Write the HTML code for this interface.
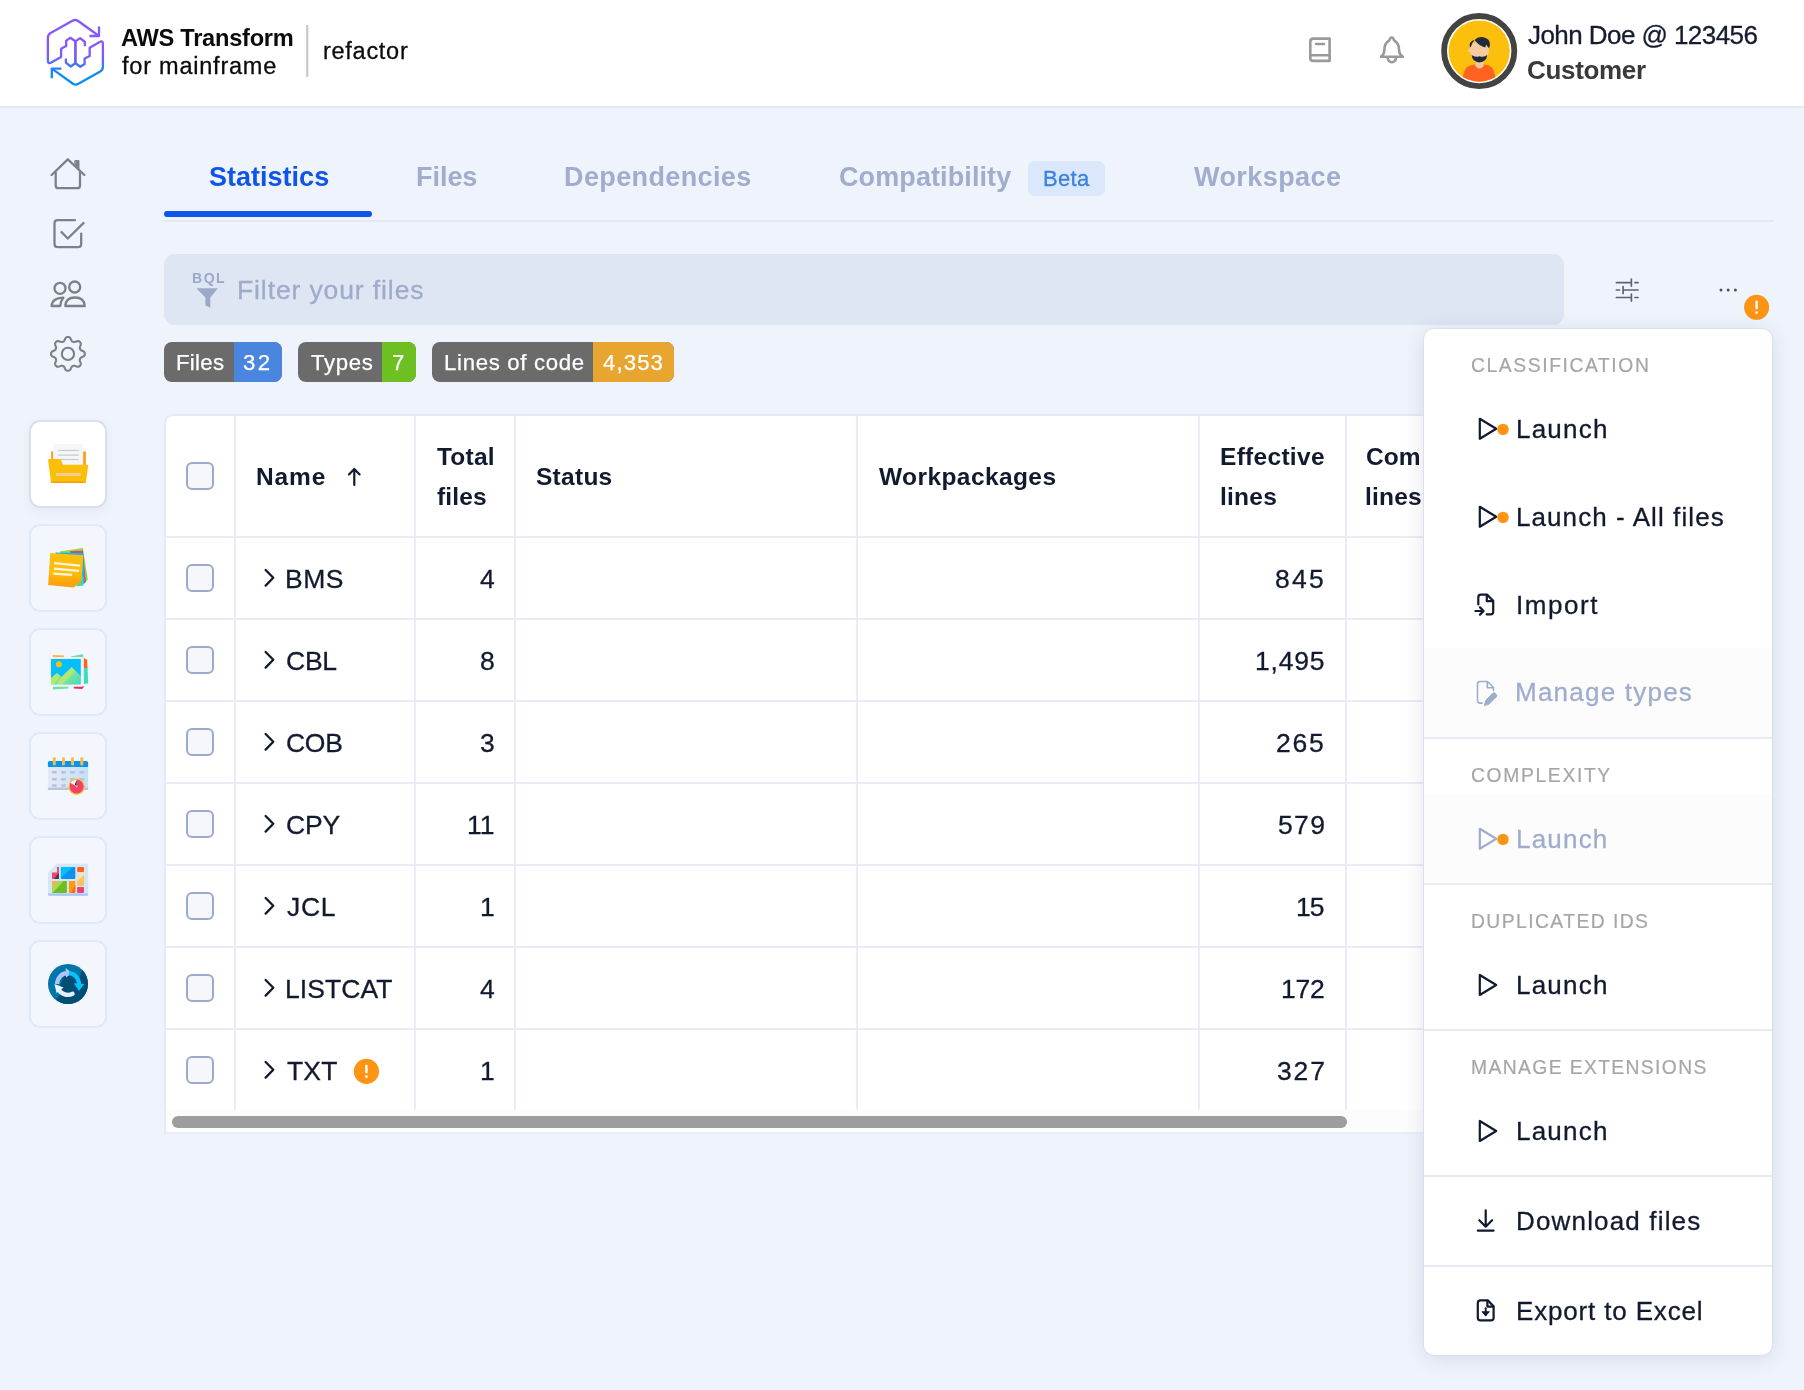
<!DOCTYPE html>
<html lang="en">
<head>
<meta charset="utf-8">
<title>AWS Transform for mainframe - refactor</title>
<style>
*{box-sizing:border-box;margin:0;padding:0}
html,body{width:1804px;height:1390px;overflow:hidden}
body{background:#eff3fc;font-family:"Liberation Sans",Arial,sans-serif;color:#111a2e;position:relative}
.a{position:absolute}
.t{position:absolute;white-space:nowrap;line-height:1;will-change:transform}
svg{position:absolute;overflow:visible}
#hdr{position:absolute;left:0;top:0;width:1804px;height:108px;background:#fff;border-bottom:2px solid #e4e8f2}
.card{position:absolute;left:28.6px;width:78.8px;height:87.4px;border-radius:11px;background:#f3f6fc;border:2px solid #dfe9f7;margin-top:-.6px}
.card.on{background:#fff;box-shadow:0 4px 12px rgba(120,140,190,.08);border-color:#d9e0ed}
.tab{font-weight:bold;color:#a0adcc}
.chip{position:absolute;top:342px;height:40px;border-radius:8px;overflow:hidden;background:#6b6b6b}
.chip i{position:absolute;top:0;right:0;height:40px}
.chipt{color:#fff;-webkit-text-stroke:.25px #fff}
#tbl{position:absolute;left:164px;top:414px;width:1300px;height:720px;background:#fff;border:2px solid #e5eaf6;border-bottom-color:#eaeef8;border-radius:9px 0 0 0;overflow:hidden}
.vl{position:absolute;top:416px;width:2px;height:694px;background:#e9edf8}
.hl{position:absolute;left:166px;width:1280px;height:2px;background:#e9edf8}
.cb{position:absolute;left:186px;width:28px;height:28px;border:2px solid #9da9ca;border-radius:6px;background:#f6f7fb}
.cell{color:#111a2e;-webkit-text-stroke:.3px #111a2e}
.th{font-weight:bold;color:#111a2e}
#menu{position:absolute;left:1424px;top:329px;width:348px;height:1026px;background:#fff;border-radius:10px;box-shadow:0 3px 22px rgba(40,50,80,.13),0 0 0 1px rgba(226,231,243,.8)}
.mh{color:#a6a6a6;-webkit-text-stroke:.2px #a6a6a6}
.mi{color:#111a2e;-webkit-text-stroke:.3px #111a2e}
.dis{color:#9fadcd;-webkit-text-stroke:.3px #9fadcd}
.md{position:absolute;left:1424px;width:348px;height:2px;background:#e6ebf6}
.mbg{position:absolute;left:1424px;width:348px;background:#fcfcfd}

</style>
</head>
<body>
<div id="hdr"></div>
<svg style="left:0;top:0" width="1804" height="106" viewBox="0 0 1804 106" fill="none">
<defs><linearGradient id="lg" gradientUnits="userSpaceOnUse" x1="0" y1="55" x2="0" y2="75"><stop offset="0" stop-color="#8458fa"/><stop offset="1" stop-color="#078ef2"/></linearGradient>
<clipPath id="avc"><circle cx="1479.2" cy="51.1" r="30.6"/></clipPath></defs>
<g stroke="url(#lg)" stroke-width="2.3" stroke-linejoin="round" stroke-linecap="butt">
<g id="lgA"><path d="M99 36 L77.8 20.8 Q75.2 19.2 72.4 20.8 L50.6 33 Q47.9 34.6 47.9 37.8 L47.9 60.6 Q47.9 64.4 51.2 62.6 L61.1 56.9 L61.1 48.7 L66.2 46 L66.2 40.6 L70.5 37.8 L75.3 41.3 L75.3 63.2 L70.7 66.5 L65.9 62.6 L65.9 58.4"/><path d="M99 26.4 L99 36 L89.4 36"/></g>
<g><path d="M 51.8 68.6 L 73.0 83.8 Q 75.6 85.4 78.4 83.8 L 100.2 71.6 Q 102.9 70.0 102.9 66.8 L 102.9 44.0 Q 102.9 40.2 99.6 42.0 L 89.7 47.7 L 89.7 55.9 L 84.6 58.6 L 84.6 64.0 L 80.3 66.8 L 75.5 63.3 L 75.5 41.4 L 80.1 38.1 L 84.9 42.0 L 84.9 46.2"/><path d="M 51.8 78.2 L 51.8 68.6 L 61.4 68.6"/></g>
</g>
<rect x="306.2" y="25" width="2.1" height="52" fill="#c6c6c6"/>
<g stroke="#9a9a9a" stroke-width="2.6" stroke-linecap="round" stroke-linejoin="round">
<path d="M1329.6 38.6 L1313.3 38.6 Q1310.3 38.6 1310.3 41.6 L1310.3 57.9 Q1310.3 60.9 1313.3 60.9 L1329.6 60.9 Z"/>
<path d="M1310.6 55.3 L1329.6 55.3"/><path d="M1316 44 L1324 44"/>
<path d="M1381.2 56.8 L1402.6 56.8" /><path d="M1381.2 56.8 Q1384.4 54 1384.4 50 C1384.4 45.5 1385.4 43 1388.4 41.2 Q1389.8 40.2 1389.9 38.8 A1.9 1.9 0 0 1 1393.5 38.8 Q1393.6 40.2 1395 41.2 C1398 43 1399 45.5 1399 50 Q1399 54 1402.6 56.8"/>
<path d="M1387.7 57.6 A4.2 4.6 0 0 0 1396.1 57.6"/>
</g>
<circle cx="1479.2" cy="51.1" r="35.1" stroke="#434341" stroke-width="5.8" fill="#fff"/>
<circle cx="1479.2" cy="51.1" r="30.6" fill="#fbbf0c"/>
<g clip-path="url(#avc)">
<path d="M1462.6 84 Q1462.6 67.5 1470 65.6 L1475 64.6 L1484 64.6 L1489 65.6 Q1495.6 67.5 1495.6 84 Z" fill="#ff6221"/>
<path d="M1475.4 58 L1483.6 58 L1483.6 66 Q1479.5 71 1475.4 66 Z" fill="#f0c79a"/>
<ellipse cx="1479.4" cy="50.4" rx="9.6" ry="9.6" fill="#f3cda1"/>
<circle cx="1469.8" cy="50.5" r="1.8" fill="#f3cda1"/>
<path d="M1471.6 55 Q1475 57.8 1479.4 56.2 Q1484 57.8 1487.2 55 Q1486.6 62.2 1479.4 62.4 Q1472.4 62.2 1471.6 55 Z" fill="#1f2a3c"/>
<path d="M1474.6 40 Q1478 36 1483.6 37.2 Q1490.4 39 1490 45 Q1489.6 47.4 1488.6 48 L1486 44.6 L1485.4 47.6 Q1479 46 1474.6 40 Z" fill="#1f2a3c"/>
<path d="M1474.6 40 Q1470.6 40.6 1469.6 44.4 Q1469.6 46.6 1470.6 47.6 Q1471.6 43 1474.6 40 Z" fill="#1f2a3c"/>
</g>
</svg>
<div id="t1" class="t " style="top:27px;font-size:23.6px;left:120.60px;letter-spacing:-0.245px;color:#0b0b0b;font-weight:bold;">AWS Transform</div>
<div id="t2" class="t " style="top:55px;font-size:23.5px;left:121.84px;letter-spacing:0.773px;color:#0b0b0b;-webkit-text-stroke:.3px #0b0b0b;">for mainframe</div>
<div id="t3" class="t " style="top:40px;font-size:23.5px;left:322.71px;letter-spacing:0.724px;color:#0b0b0b;-webkit-text-stroke:.3px #0b0b0b;">refactor</div>
<div id="t4" class="t " style="top:22px;font-size:26px;left:1528.15px;letter-spacing:-0.562px;color:#151c2e;-webkit-text-stroke:.3px #151c2e;">John Doe @ 123456</div>
<div id="t5" class="t " style="top:57px;font-size:26px;left:1526.97px;letter-spacing:-0.331px;color:#3a3a3a;font-weight:bold;">Customer</div>
<svg style="left:0;top:140px" width="140" height="260" viewBox="0 140 140 260" fill="none" stroke="#7c808a" stroke-width="2.3" stroke-linecap="round" stroke-linejoin="round">
<path d="M51.6 175 L67.8 159.3 L84.4 175"/><path d="M55.7 172.4 L55.7 185.4 Q55.7 188.2 58.5 188.2 L77.2 188.2 Q80 188.2 80 185.4 L80 172.4"/>
<path d="M75.2 160.6 L79 160.6 L79 170.2 L75.2 166.4 Z" fill="#7c808a" stroke-width="1"/>
<path d="M75 220.2 L57.6 220.2 Q54.5 220.2 54.5 223.3 L54.5 244.1 Q54.5 247.2 57.6 247.2 L78.1 247.2 Q81.2 247.2 81.2 244.1 L81.2 233.6"/>
<path d="M60.8 231.4 L67.8 238.5 L84.2 222.4" stroke-linecap="butt" stroke-linejoin="miter"/>
<circle cx="60" cy="288.3" r="5.5"/><circle cx="74.7" cy="287" r="5.5"/>
<path d="M65.3 306 C65.6 300.4 68.6 297.5 75 297.5 C81.4 297.5 84.4 300.4 84.7 306 Z"/>
<path d="M51.6 306 C52 300.6 55.4 297.7 63.4 297.6 C61.4 300 60.5 302.6 60.3 306 Z"/>
<circle cx="67.95" cy="353.9" r="6.1" stroke-width="2.1"/>
<path d="M84.85 353.90 L84.80 354.56 L84.61 355.21 L84.24 355.83 L83.58 356.38 L82.66 356.83 L81.73 357.21 L81.04 357.59 L80.58 358.00 L80.28 358.45 L80.05 358.91 L79.88 359.40 L79.79 359.93 L79.81 360.54 L80.04 361.31 L80.42 362.23 L80.75 363.20 L80.83 364.05 L80.66 364.76 L80.33 365.34 L79.90 365.85 L79.39 366.28 L78.81 366.61 L78.10 366.78 L77.25 366.70 L76.28 366.37 L75.36 365.99 L74.59 365.76 L73.98 365.74 L73.45 365.83 L72.96 366.00 L72.50 366.23 L72.05 366.53 L71.64 366.99 L71.26 367.68 L70.88 368.61 L70.43 369.53 L69.88 370.19 L69.26 370.56 L68.61 370.75 L67.95 370.80 L67.29 370.75 L66.64 370.56 L66.02 370.19 L65.47 369.53 L65.02 368.61 L64.64 367.68 L64.26 366.99 L63.85 366.53 L63.40 366.23 L62.94 366.00 L62.45 365.83 L61.92 365.74 L61.31 365.76 L60.54 365.99 L59.62 366.37 L58.65 366.70 L57.80 366.78 L57.09 366.61 L56.51 366.28 L56.00 365.85 L55.57 365.34 L55.24 364.76 L55.07 364.05 L55.15 363.20 L55.48 362.23 L55.86 361.31 L56.09 360.54 L56.11 359.93 L56.02 359.40 L55.85 358.91 L55.62 358.45 L55.32 358.00 L54.86 357.59 L54.17 357.21 L53.24 356.83 L52.32 356.38 L51.66 355.83 L51.29 355.21 L51.10 354.56 L51.05 353.90 L51.10 353.24 L51.29 352.59 L51.66 351.97 L52.32 351.42 L53.24 350.97 L54.17 350.59 L54.86 350.21 L55.32 349.80 L55.62 349.35 L55.85 348.89 L56.02 348.40 L56.11 347.87 L56.09 347.26 L55.86 346.49 L55.48 345.57 L55.15 344.60 L55.07 343.75 L55.24 343.04 L55.57 342.46 L56.00 341.95 L56.51 341.52 L57.09 341.19 L57.80 341.02 L58.65 341.10 L59.62 341.43 L60.54 341.81 L61.31 342.04 L61.92 342.06 L62.45 341.97 L62.94 341.80 L63.40 341.57 L63.85 341.27 L64.26 340.81 L64.64 340.12 L65.02 339.19 L65.47 338.27 L66.02 337.61 L66.64 337.24 L67.29 337.05 L67.95 337.00 L68.61 337.05 L69.26 337.24 L69.88 337.61 L70.43 338.27 L70.88 339.19 L71.26 340.12 L71.64 340.81 L72.05 341.27 L72.50 341.57 L72.96 341.80 L73.45 341.97 L73.98 342.06 L74.59 342.04 L75.36 341.81 L76.28 341.43 L77.25 341.10 L78.10 341.02 L78.81 341.19 L79.39 341.52 L79.90 341.95 L80.33 342.46 L80.66 343.04 L80.83 343.75 L80.75 344.60 L80.42 345.57 L80.04 346.49 L79.81 347.26 L79.79 347.87 L79.88 348.40 L80.05 348.89 L80.28 349.35 L80.58 349.80 L81.04 350.21 L81.73 350.59 L82.66 350.97 L83.58 351.42 L84.24 351.97 L84.61 352.59 L84.80 353.24 Z" stroke-width="2.1"/>
</svg>
<div class="card on" style="top:421px"></div>
<div class="card" style="top:525px"></div>
<div class="card" style="top:629px"></div>
<div class="card" style="top:733px"></div>
<div class="card" style="top:837px"></div>
<div class="card" style="top:941px"></div>
<svg style="left:0;top:400px" width="140" height="640" viewBox="0 400 140 640">
<defs>
<linearGradient id="gn" x1="0" y1="0" x2="0" y2="1"><stop offset=".55" stop-color="#fbbf0a"/><stop offset="1" stop-color="#ff9a0c"/></linearGradient>
<linearGradient id="gc" x1="0" y1="0" x2="1" y2="0"><stop offset="0" stop-color="#e6eaf6"/><stop offset="1" stop-color="#c6dff6"/></linearGradient>
<linearGradient id="gm" x1="0" y1="0" x2="1" y2="1"><stop offset=".2" stop-color="#8ee49a"/><stop offset="1" stop-color="#40dcc0"/></linearGradient>
<clipPath id="cph"><rect x="50.9" y="658.8" width="30" height="25.7" rx="1.2"/></clipPath>
<clipPath id="ccl"><circle cx="68" cy="984" r="20"/></clipPath>
</defs>
<!-- folder -->
<rect x="51.2" y="451.3" width="2" height="9" rx=".8" fill="#ff9a0c"/><rect x="83.1" y="451.3" width="2.7" height="15" rx="1" fill="#ff9a0c"/>
<rect x="53.1" y="444.3" width="30" height="21" rx="1.5" fill="#f6f6f8"/>
<rect x="58.3" y="449.9" width="20.4" height="1.2" fill="#c5c9d1"/><rect x="58.3" y="454.5" width="20.4" height="1.2" fill="#c5c9d1"/><rect x="61" y="458.9" width="17.7" height="1.2" fill="#c5c9d1"/>
<path d="M49 459 L59.8 459 Q60.8 459 61.2 460 L62.6 464 Q62.9 464.8 63.9 464.8 L87.2 464.8 Q88.3 464.8 88.2 466 L85.9 481.8 Q85.7 483 84.5 483 L52.3 483 Q51.1 483 50.9 481.8 L48.1 460.2 Q48 459 49 459 Z" fill="#fbbf0a"/>
<path d="M50.8 481.6 L86 481.6 L85.9 481.9 Q85.7 483.1 84.5 483.1 L52.3 483.1 Q51.1 483.1 50.9 481.9 Z" fill="#ff9a0c"/>
<rect x="56.1" y="473" width="24.6" height="2.8" fill="#f5cda0"/>
<!-- sticky notes -->
<path d="M59.6 551.4 L82.9 548.1 L87.8 579.4 L83.7 583.7 Z" fill="#8fd94a"/>
<path d="M69.9 551.2 L82.9 550.7 L85.9 582 L83.7 584 Z" fill="#f0386b"/>
<path d="M55 552.6 L83.3 553.1 L84.5 582 L80 585 Z" fill="#14b5f5"/>
<path d="M76 586.2 L83.6 585.5 L83.3 575 Z" fill="#3dd6b5"/>
<path d="M50.3 552.9 L83.3 555.3 L81.6 580.7 L73.8 587.6 L48.1 585 Z" fill="url(#gn)"/>
<g stroke="#fdf3e4" stroke-width="2.2"><path d="M54 563.2 L79.9 565.6"/><path d="M54 568.6 L79 570.8"/><path d="M53.3 573.6 L72.1 574.9"/></g>
<!-- photos -->
<path d="M52.7 654.9 L64 655.4 L64 658 L52.7 658 Z" fill="#fbb53a"/>
<path d="M70.8 656.4 L82.9 654 L83.6 658 L70.8 658 Z" fill="#70e29a"/>
<path d="M83.5 658 L87 659.4 L87.6 668 L83.5 668 Z" fill="#ff6414"/>
<path d="M83.5 667.9 L87.6 667.9 L88.2 683.4 L83.5 684 Z" fill="#3ddcc0"/>
<path d="M52.7 686 L68.4 686 L68.4 688.6 L53 689.6 Z" fill="#70e29a"/>
<path d="M73.8 686 L83.7 686 L83.6 687.4 L82 689 L73.8 688.6 Z" fill="#f0285c"/>
<rect x="48.8" y="656.9" width="34.9" height="29.8" rx="1.6" fill="#eff1fb"/>
<g clip-path="url(#cph)"><rect x="50.9" y="658.8" width="30" height="25.7" fill="#05bffd"/>
<path d="M50.9 678 L57 673 L61.4 677 L71.7 667 L80.9 676.6 L80.9 684.5 L50.9 684.5 Z" fill="#b0e870"/>
<path d="M75.4 670.8 L80.9 676.6 L80.9 684.5 L62.4 684.5 Z" fill="url(#gm)"/><path d="M58.6 674.4 L61.4 677.1 L56.7 684.5 L53.8 684.5 L59.8 677 Z" fill="#7ee2a2"/>
<circle cx="58.9" cy="664.2" r="3" fill="#fbbf0a"/></g>
<!-- calendar -->
<rect x="47.9" y="766" width="40.2" height="24" rx="1" fill="url(#gc)"/>
<rect x="47.9" y="787.6" width="40.2" height="2.4" fill="#b9c5dd"/>
<path d="M47.9 767.1 L47.9 762.6 Q47.9 760.9 49.6 760.9 L86.4 760.9 Q88.1 760.9 88.1 762.6 L88.1 767.1 Z" fill="#0c93f2"/>
<g fill="#b4c2dd"><rect x="51.9" y="771" width="4.8" height="2.6" rx=".6"/><rect x="61.1" y="771" width="4.8" height="2.6" rx=".6"/><rect x="70.1" y="771" width="4.8" height="2.6" rx=".6"/><rect x="79.4" y="771" width="4.8" height="2.6" rx=".6"/>
<rect x="51.9" y="777.9" width="4.8" height="2.6" rx=".6"/><rect x="61.1" y="777.9" width="4.8" height="2.6" rx=".6"/><rect x="70.1" y="777.9" width="4.8" height="2.6" rx=".6"/><rect x="79.4" y="777.9" width="4.8" height="2.6" rx=".6"/>
<rect x="51.9" y="784.2" width="4.8" height="2.6" rx=".6"/><rect x="61.1" y="784.2" width="4.8" height="2.6" rx=".6"/></g>
<g fill="#f7bf3e"><rect x="52.8" y="757" width="3" height="8.6" rx="1.5"/><rect x="62" y="757" width="3" height="8.6" rx="1.5"/><rect x="71" y="757" width="3" height="8.6" rx="1.5"/><rect x="80.3" y="757" width="3" height="8.6" rx="1.5"/></g>
<circle cx="76.6" cy="786.6" r="7.6" fill="#f0416f" stroke="#fbbf24" stroke-width="1.2"/>
<path d="M76.6 786.6 L76.6 779.6 A7 7 0 0 0 70.6 783 Z" fill="#f4f1ee"/>
<path d="M76.6 786.6 L76.6 780.2 L74.8 784.6 Z" fill="#2b2b3a"/>
<circle cx="76.6" cy="786.6" r="1" fill="#fbbf24"/>
<!-- dashboard -->
<path d="M56.6 863.8 L87 863.8 Q88.1 863.8 88.1 864.9 L88.1 894.6 Q88.1 895.7 87 895.7 L49.2 895.7 Q48.1 895.7 48.1 894.6 L48.1 872.4 Z" fill="#d5e6f8"/>
<path d="M48.1 893.4 L88.1 893.4 L88.1 894.6 Q88.1 895.7 87 895.7 L49.2 895.7 Q48.1 895.7 48.1 894.6 Z" fill="#a5c6f6"/>
<path d="M57 867 L58.9 867 L58.9 878.9 L52 878.9 L52 872.4 L57 872.4 Z" fill="#f0416f"/>
<path d="M58.9 872.8 L58.9 878.9 L54 878.9 Z" fill="#3f3f46"/>
<rect x="60.9" y="867" width="14.4" height="11.9" rx=".8" fill="#0d92f0"/><path d="M60.9 867.8 Q60.9 867 61.7 867 L73 867 L60.9 878 Z" fill="#05bffd"/>
<rect x="77.1" y="867" width="6.9" height="5" rx="1" fill="#ff6414"/>
<rect x="77.1" y="873.1" width="6.9" height="12.7" rx="1" fill="#f9c55c"/><path d="M77.1 874.1 Q77.1 873.1 78.1 873.1 L83 873.1 Q84 873.1 84 874.1 L84 875 L77.1 881 Z" fill="#fbe2bd"/>
<rect x="77.1" y="886.9" width="6.9" height="6" rx=".8" fill="#f0416f"/>
<rect x="52" y="880.9" width="14.9" height="12" rx=".8" fill="#6bbf1f"/><path d="M52 881.7 Q52 880.9 52.8 880.9 L63.6 880.9 L52.6 892.9 L52 892.9 Z" fill="#a8d95a"/><path d="M52 881.7 Q52 880.9 52.8 880.9 L58.6 880.9 L52 887.6 Z" fill="#fbb348"/>
<rect x="68.9" y="880.9" width="6.4" height="12" rx=".8" fill="#ff9a0c"/><path d="M75.3 885 L75.3 892.1 Q75.3 892.9 74.5 892.9 L70.6 892.9 Z" fill="#ff6a1c"/>
<!-- refresh -->
<circle cx="68" cy="984" r="20" fill="#0275a8"/>
<g clip-path="url(#ccl)"><path d="M84 964 L96 976 L76 1012 L56 1000 L62 992 L60 985 L64 976 L72 974 L79 979 Z" fill="#014e75"/></g>
<path d="M57.2 984 A10.8 10.8 0 0 1 67 973" fill="none" stroke="#a8c8fa" stroke-width="4.3"/>
<path d="M65.6 968 L72.4 973 L66 977.6 Z" fill="#a8c8fa"/>
<path d="M69 973.2 A10.8 10.8 0 0 1 78.9 984" fill="none" stroke="#05c3ff" stroke-width="4.3"/>
<path d="M73.8 983.2 L84.2 984 L79 991 Z" fill="#05c3ff"/>
<path d="M72.6 993.8 A10.8 10.8 0 0 1 58.6 989.4" fill="none" stroke="#e3eefd" stroke-width="4.3" stroke-linecap="round"/>
<path d="M54.4 984 L63.6 987.6 L56.6 993 Z" fill="#eef3fd"/>
</svg>
<div class="a" style="left:164px;top:220px;width:1610px;height:2px;background:#e3e8f3"></div>
<div class="a" style="left:164px;top:211px;width:208px;height:6px;border-radius:3px;background:#0f55ea"></div>
<div id="t6" class="t tab" style="top:164px;font-size:27px;left:209.04px;letter-spacing:0.013px;color:#1055e8;">Statistics</div>
<div id="t7" class="t tab" style="top:164px;font-size:27px;left:415.72px;letter-spacing:-0.040px;">Files</div>
<div id="t8" class="t tab" style="top:164px;font-size:27px;left:564.25px;letter-spacing:0.382px;">Dependencies</div>
<div id="t9" class="t tab" style="top:164px;font-size:27px;left:839.20px;letter-spacing:0.101px;">Compatibility</div>
<div class="a" style="left:1028px;top:161px;width:77px;height:35px;border-radius:7px;background:#dbe8fb"></div>
<div id="t10" class="t " style="top:168px;font-size:22px;left:1042.51px;letter-spacing:0.328px;color:#3a82df;-webkit-text-stroke:.3px #3a82df;">Beta</div>
<div id="t11" class="t tab" style="top:164px;font-size:27px;left:1193.65px;letter-spacing:0.421px;">Workspace</div>
<div class="a" style="left:164px;top:254px;width:1400px;height:71px;border-radius:11px;background:#dee5f3"></div>
<div id="t12" class="t " style="top:271px;font-size:14px;left:191.50px;letter-spacing:1.529px;color:#9aa8c9;font-weight:bold;">BQL</div>
<svg style="left:190px;top:285px" width="34" height="28" viewBox="190 285 34 28"><path d="M197.4 288.2 L217 288.2 Q217.9 288.2 217.4 289 L210.3 297.6 L210.3 307.8 L205.4 305.2 L205.4 297.6 L197 289 Q196.5 288.2 197.4 288.2 Z" fill="#9aa8c9"/></svg>
<div id="t13" class="t " style="top:277px;font-size:26.5px;left:237.15px;letter-spacing:0.889px;color:#9eabcb;-webkit-text-stroke:.3px #9eabcb;">Filter your files</div>
<svg style="left:1600px;top:270px" width="190" height="60" viewBox="1600 270 190 60" fill="none">
<g stroke="#5f636e" stroke-width="1.7" stroke-linecap="round">
<path d="M1616.4 282.6 L1631.4 282.6 M1631.4 279.1 L1631.4 286.1 M1635 282.6 L1638 282.6"/>
<path d="M1616.4 290 L1619.4 290 M1623.1 286.6 L1623.1 293.4 M1623.1 290 L1638 290"/>
<path d="M1616.4 297.5 L1631.4 297.5 M1631.4 294 L1631.4 301 M1635 297.5 L1638 297.5"/>
</g>
<circle cx="1721" cy="290" r="1.5" fill="#50535e"/><circle cx="1728.2" cy="290" r="1.5" fill="#50535e"/><circle cx="1735.4" cy="290" r="1.5" fill="#50535e"/>
<circle cx="1756.6" cy="307.3" r="12.5" fill="#fd9413"/>
<rect x="1755.4" y="300.6" width="2.4" height="8.6" rx="1" fill="#fff"/><circle cx="1756.6" cy="312.6" r="1.4" fill="#fff"/>
</svg>
<div class="chip" style="left:164px;width:118px"><i style="width:48px;background:#4a86e0"></i></div><div id="t14" class="t chipt" style="top:352px;font-size:22.2px;left:176.21px;letter-spacing:0.285px;">Files</div><div id="t15" class="t chipt" style="top:352px;font-size:22.2px;left:242.54px;letter-spacing:2.300px;">32</div>
<div class="chip" style="left:298px;width:118px"><i style="width:34px;background:#6dbf22"></i></div><div id="t16" class="t chipt" style="top:352px;font-size:22.2px;left:311.13px;letter-spacing:0.632px;">Types</div><div id="t17" class="t chipt" style="top:352px;font-size:22.2px;left:391.86px;letter-spacing:0.000px;">7</div>
<div class="chip" style="left:432px;width:242px"><i style="width:81px;background:#e8a530"></i></div><div id="t18" class="t chipt" style="top:352px;font-size:22.2px;left:444.03px;letter-spacing:0.680px;">Lines of code</div><div id="t19" class="t chipt" style="top:352px;font-size:22.2px;left:602.84px;letter-spacing:1.106px;">4,353</div>
<div id="tbl"></div>
<div class="a" style="left:166px;top:1110px;width:1280px;height:22px;background:#fcfcfc"></div>
<div class="a" style="left:172px;top:1116px;width:1175px;height:12px;border-radius:6px;background:#9d9d9d"></div>
<div class="vl" style="left:234px"></div>
<div class="vl" style="left:414px"></div>
<div class="vl" style="left:514px"></div>
<div class="vl" style="left:856px"></div>
<div class="vl" style="left:1198px"></div>
<div class="vl" style="left:1345px"></div>
<div class="hl" style="top:536px"></div>
<div class="hl" style="top:618px"></div>
<div class="hl" style="top:700px"></div>
<div class="hl" style="top:782px"></div>
<div class="hl" style="top:864px"></div>
<div class="hl" style="top:946px"></div>
<div class="hl" style="top:1028px"></div>
<div class="cb" style="top:462px"></div>
<div id="t20" class="t th" style="top:465px;font-size:24.5px;left:256.02px;letter-spacing:0.854px;">Name</div>
<svg style="left:344px;top:464px" width="20" height="26" viewBox="344 464 20 26" fill="none" stroke="#111a2e" stroke-width="2.2" stroke-linecap="round" stroke-linejoin="round"><path d="M354.3 485 L354.3 469.4 M349 474.4 L354.3 469 L359.6 474.4"/></svg>
<div id="t21" class="t th" style="top:445px;font-size:24.5px;left:437.39px;letter-spacing:0.215px;">Total</div>
<div id="t22" class="t th" style="top:485px;font-size:24.5px;left:436.51px;letter-spacing:0.165px;">files</div>
<div id="t23" class="t th" style="top:465px;font-size:24.5px;left:535.93px;letter-spacing:0.273px;">Status</div>
<div id="t24" class="t th" style="top:465px;font-size:24.5px;left:879.30px;letter-spacing:0.413px;">Workpackages</div>
<div id="t25" class="t th" style="top:445px;font-size:24.5px;left:1220.48px;letter-spacing:0.301px;">Effective</div>
<div id="t26" class="t th" style="top:485px;font-size:24.5px;left:1219.69px;letter-spacing:0.231px;">lines</div>
<div id="t27" class="t th" style="top:445px;font-size:24.5px;left:1366.40px;width:54px;overflow:hidden;">Comment</div>
<div id="t28" class="t th" style="top:485px;font-size:24.5px;left:1365.29px;letter-spacing:0.208px;">lines</div>
<div class="cb" style="top:564px"></div>
<div id="t29" class="t cell" style="top:566px;font-size:26.5px;left:285.35px;letter-spacing:0.553px;">BMS</div>
<div id="t30" class="t cell" style="top:566px;font-size:26.5px;right:1309.22px;">4</div>
<div id="t31" class="t cell" style="top:566px;font-size:26.5px;right:477.56px;letter-spacing:2.300px;">845</div>
<div class="cb" style="top:646px"></div>
<div id="t32" class="t cell" style="top:648px;font-size:26.5px;left:286.35px;letter-spacing:-0.240px;">CBL</div>
<div id="t33" class="t cell" style="top:648px;font-size:26.5px;right:1309.07px;">8</div>
<div id="t34" class="t cell" style="top:648px;font-size:26.5px;right:478.70px;letter-spacing:0.810px;">1,495</div>
<div class="cb" style="top:728px"></div>
<div id="t35" class="t cell" style="top:730px;font-size:26.5px;left:286.35px;letter-spacing:-0.309px;">COB</div>
<div id="t36" class="t cell" style="top:730px;font-size:26.5px;right:1309.22px;">3</div>
<div id="t37" class="t cell" style="top:730px;font-size:26.5px;right:478.14px;letter-spacing:1.738px;">265</div>
<div class="cb" style="top:810px"></div>
<div id="t38" class="t cell" style="top:812px;font-size:26.5px;left:286.35px;letter-spacing:-0.156px;">CPY</div>
<div id="t39" class="t cell" style="top:812px;font-size:26.5px;right:1309.28px;">11</div>
<div id="t40" class="t cell" style="top:812px;font-size:26.5px;right:477.87px;letter-spacing:1.332px;">579</div>
<div class="cb" style="top:892px"></div>
<div id="t41" class="t cell" style="top:894px;font-size:26.5px;left:287.00px;letter-spacing:0.700px;">JCL</div>
<div id="t42" class="t cell" style="top:894px;font-size:26.5px;right:1309.44px;">1</div>
<div id="t43" class="t cell" style="top:894px;font-size:26.5px;right:480.86px;letter-spacing:-1.000px;">15</div>
<div class="cb" style="top:974px"></div>
<div id="t44" class="t cell" style="top:976px;font-size:26.5px;left:285.35px;letter-spacing:0.073px;">LISTCAT</div>
<div id="t45" class="t cell" style="top:976px;font-size:26.5px;right:1309.22px;">4</div>
<div id="t46" class="t cell" style="top:976px;font-size:26.5px;right:479.07px;letter-spacing:-0.240px;">172</div>
<div class="cb" style="top:1056px"></div>
<div id="t47" class="t cell" style="top:1058px;font-size:26.5px;left:286.89px;letter-spacing:0.179px;">TXT</div>
<div id="t48" class="t cell" style="top:1058px;font-size:26.5px;right:1309.44px;">1</div>
<div id="t49" class="t cell" style="top:1058px;font-size:26.5px;right:477.22px;letter-spacing:1.870px;">327</div>
<svg style="left:255px;top:560px" width="30" height="530" viewBox="255 560 30 530" fill="none" stroke="#111a2e" stroke-width="2.3" stroke-linecap="round" stroke-linejoin="round"><path d="M265.6 570.0 L273.3 577.8 L265.6 585.6"/><path d="M265.6 652.0 L273.3 659.8 L265.6 667.6"/><path d="M265.6 734.0 L273.3 741.8 L265.6 749.6"/><path d="M265.6 816.0 L273.3 823.8 L265.6 831.6"/><path d="M265.6 898.0 L273.3 905.8 L265.6 913.6"/><path d="M265.6 980.0 L273.3 987.8 L265.6 995.6"/><path d="M265.6 1062.0 L273.3 1069.8 L265.6 1077.6"/></svg>
<svg style="left:350px;top:1055px" width="34" height="34" viewBox="350 1055 34 34"><circle cx="366.4" cy="1071.4" r="12.6" fill="#fd9413"/><rect x="365.2" y="1064.8" width="2.4" height="8.4" rx="1" fill="#fff"/><circle cx="366.4" cy="1076.6" r="1.4" fill="#fff"/></svg>
<div id="menu"></div>
<div class="mbg" style="top:648px;height:89px"></div>
<div class="mbg" style="top:794px;height:89px"></div>
<div class="md" style="top:737px"></div>
<div class="md" style="top:883px"></div>
<div class="md" style="top:1029px"></div>
<div class="md" style="top:1175px"></div>
<div class="md" style="top:1265px"></div>
<div id="t50" class="t mh" style="top:356px;font-size:19.3px;left:1471.43px;letter-spacing:1.590px;">CLASSIFICATION</div>
<div id="t51" class="t mh" style="top:766px;font-size:19.3px;left:1471.43px;letter-spacing:1.659px;">COMPLEXITY</div>
<div id="t52" class="t mh" style="top:912px;font-size:19.3px;left:1471.31px;letter-spacing:1.439px;">DUPLICATED IDS</div>
<div id="t53" class="t mh" style="top:1058px;font-size:19.3px;left:1471.31px;letter-spacing:1.389px;">MANAGE EXTENSIONS</div>
<div id="t54" class="t mi" style="top:416px;font-size:26px;left:1515.64px;letter-spacing:1.208px;">Launch</div>
<div id="t55" class="t mi" style="top:504px;font-size:26px;left:1515.64px;letter-spacing:1.079px;">Launch - All files</div>
<div id="t56" class="t mi" style="top:592px;font-size:26px;left:1515.73px;letter-spacing:1.537px;">Import</div>
<div id="t57" class="t mi dis" style="top:679px;font-size:26px;left:1515.09px;letter-spacing:1.231px;">Manage types</div>
<div id="t58" class="t mi dis" style="top:826px;font-size:26px;left:1515.69px;letter-spacing:1.198px;">Launch</div>
<div id="t59" class="t mi" style="top:972px;font-size:26px;left:1515.64px;letter-spacing:1.208px;">Launch</div>
<div id="t60" class="t mi" style="top:1118px;font-size:26px;left:1515.64px;letter-spacing:1.208px;">Launch</div>
<div id="t61" class="t mi" style="top:1208px;font-size:26px;left:1516.04px;letter-spacing:1.166px;">Download files</div>
<div id="t62" class="t mi" style="top:1298px;font-size:26px;left:1516.04px;letter-spacing:0.839px;">Export to Excel</div>
<svg style="left:1424px;top:329px" width="348" height="1026" viewBox="1424 329 348 1026" fill="none" stroke-width="2.2" stroke-linecap="round" stroke-linejoin="round"><path d="M1479.8 418.8 L1479.8 438.8 L1496.2 428.8 Z" stroke="#111a2e"/><circle cx="1503" cy="429.4" r="5.7" fill="#fd9413" stroke="none"/><path d="M1479.8 506.8 L1479.8 526.8 L1496.2 516.8 Z" stroke="#111a2e"/><circle cx="1503" cy="517.4" r="5.7" fill="#fd9413" stroke="none"/><path d="M1479.8 828.8 L1479.8 848.8 L1496.2 838.8 Z" stroke="#9fadcd"/><circle cx="1503" cy="839.4" r="5.7" fill="#fd9413" stroke="none"/><path d="M1479.8 975.0 L1479.8 995.0 L1496.2 985.0 Z" stroke="#111a2e"/><path d="M1479.8 1121.0 L1479.8 1141.0 L1496.2 1131.0 Z" stroke="#111a2e"/><g stroke="#111a2e"><path d="M1478.3 604.4 L1478.3 597.2 Q1478.3 594.6 1480.9 594.6 L1487 594.6 L1493.2 600.8 L1493.2 611.7 Q1493.2 614.3 1490.6 614.3 L1486.6 614.3"/><path d="M1486.8 595 L1486.8 601.2 L1493 601.2"/><path d="M1475.4 611 L1483.2 611 M1480 607.4 L1483.6 611 L1480 614.6"/></g><g stroke="#9fadcd" stroke-width="1.6" transform="translate(-0.9 -0.3)"><path d="M1483 703.4 L1481 703.4 Q1478.4 703.4 1478.4 700.8 L1478.4 684.4 Q1478.4 681.8 1481 681.8 L1488.4 681.8 L1494.4 687.8 L1494.4 690.8"/><path d="M1488.2 682.2 L1488.2 688 L1494 688"/><path d="M1485.4 705.6 L1486.6 700.6 L1493.6 693.6 Q1495 692.4 1496.4 693.8 L1497.2 694.6 Q1498.4 696 1497.2 697.2 L1490.2 704.2 Z" fill="#9fadcd" stroke-width="1"/></g><g stroke="#111a2e"><path d="M1485.7 1210.3 L1485.7 1226.4 M1479.3 1220.2 L1485.7 1226.7 L1492.1 1220.2"/><path d="M1477.8 1230.6 L1493.6 1230.6"/></g><g stroke="#111a2e"><path d="M1477.8 1303 Q1477.8 1300.4 1480.4 1300.4 L1487.8 1300.4 L1493.6 1306.2 L1493.6 1317.8 Q1493.6 1320.4 1491 1320.4 L1480.4 1320.4 Q1477.8 1320.4 1477.8 1317.8 Z"/><path d="M1487.4 1300.8 L1487.4 1306.6 L1493.2 1306.6"/><path d="M1485.7 1308.2 L1485.7 1315.2" stroke-width="1.9"/><path d="M1482.3 1312 L1485.7 1315.8 L1489.1 1312 Z" fill="#111a2e" stroke-width="1"/></g></svg>
</body>
</html>
